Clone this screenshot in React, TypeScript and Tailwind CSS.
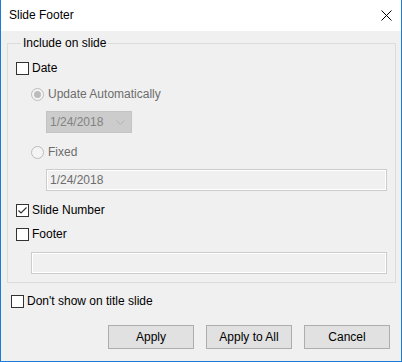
import React from 'react'

function CheckBox({ checked }: { checked?: boolean }) {
  return (
    <span className="flex h-[13px] w-[13px] shrink-0 items-center justify-center border border-[#333333] bg-white">
      {checked && (
        <svg width="11" height="11" viewBox="0 0 11 11">
          <polyline points="1.5,5.5 4,8 9.5,2.5" fill="none" stroke="#333333" strokeWidth="1.2" />
        </svg>
      )}
    </span>
  )
}

function Radio({ checked }: { checked?: boolean }) {
  return (
    <span className="flex h-[13px] w-[13px] shrink-0 items-center justify-center rounded-full border border-[#bcbcbc] bg-[#f4f4f4]">
      {checked && <span className="h-[7px] w-[7px] rounded-full bg-[#bcbcbc]" />}
    </span>
  )
}

function Row({ children, className = '' }: { children: React.ReactNode; className?: string }) {
  return <div className={`flex h-[16px] items-center gap-[3px] ${className}`}>{children}</div>
}

export default function App() {
  return (
    <div
      className="flex h-[362px] w-[402px] flex-col border-x border-b border-[#1c7bd4] bg-[#f0f0f0] text-[12px] leading-[15px] text-black"
      style={{ fontFamily: '"Liberation Sans", Arial, sans-serif' }}
    >
      {/* title bar */}
      <div className="flex h-[31px] shrink-0 items-center justify-between bg-white pl-[8px] pr-[9px]">
        <span>Slide Footer</span>
        <svg width="11" height="11" viewBox="0 0 11 11">
          <path d="M0.5 0.5 L10.5 10.5 M10.5 0.5 L0.5 10.5" stroke="#000" strokeWidth="1" />
        </svg>
      </div>

      <div className="flex flex-1 flex-col pl-[6px] pr-[5px]">
        <fieldset className="mt-[5px] border border-[#dcdcdc] pb-[8px] pl-[8px] pr-[8px] pt-[9px]">
          <legend className="ml-[5px] px-[2px]">Include on slide</legend>

          <Row>
            <CheckBox />
            <span>Date</span>
          </Row>

          <Row className="ml-[15px] mt-[10px] gap-[4px] text-[#6d6d6d]">
            <Radio checked />
            <span>Update Automatically</span>
          </Row>

          <div className="ml-[30px] mt-[9px] flex h-[22px] w-[86px] items-center justify-between border border-[#c4c4c4] bg-[#cccccc] pl-[3px] pr-[6px] text-[#838383]">
            <span>1/24/2018</span>
            <svg width="9" height="5" viewBox="0 0 9 5">
              <polyline points="0.5,0.5 4.5,4.5 8.5,0.5" fill="none" stroke="#b4b4b4" strokeWidth="1" />
            </svg>
          </div>

          <Row className="ml-[15px] mt-[11px] gap-[4px] text-[#6d6d6d]">
            <Radio />
            <span>Fixed</span>
          </Row>

          <div className="ml-[30px] mt-[9px] flex h-[22px] items-center border border-[#cccccc] bg-[#f0f0f0] pl-[3px] text-[#6d6d6d] shadow-[inset_0_0_0_1px_#ffffff]">
            1/24/2018
          </div>

          <Row className="mt-[11px]">
            <CheckBox checked />
            <span>Slide Number</span>
          </Row>

          <Row className="mt-[8px]">
            <CheckBox />
            <span>Footer</span>
          </Row>

          <div className="ml-[15px] mt-[10px] h-[22px] border border-[#cccccc] bg-[#f0f0f0] shadow-[inset_0_0_0_1px_#ffffff]" />
        </fieldset>

        <Row className="ml-[4px] mt-[10px]">
          <CheckBox />
          <span>Don't show on title slide</span>
        </Row>

        <div className="mt-[16px] flex justify-end gap-[12px] pr-[6px]">
          {['Apply', 'Apply to All', 'Cancel'].map((label) => (
            <button
              key={label}
              className="h-[24px] w-[86px] border border-[#adadad] bg-[#e1e1e1] text-center"
            >
              {label}
            </button>
          ))}
        </div>
      </div>
    </div>
  )
}
